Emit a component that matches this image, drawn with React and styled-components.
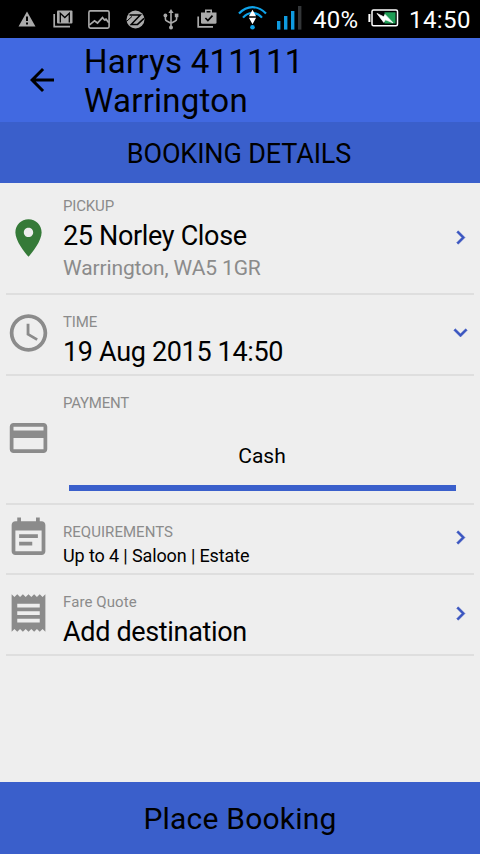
import React from 'react';
import styled, { createGlobalStyle } from 'styled-components';

const GlobalStyle = createGlobalStyle`
  * {
    box-sizing: border-box;
  }

  body {
    margin: 0;
    background: #eee;
    font-family: Roboto, "Liberation Sans", sans-serif;
    color: #000;
  }
`;

const Screen = styled.div`
  display: flex;
  flex-direction: column;
  width: 480px;
  height: 854px;
  overflow: hidden;
  background: #eee;
`;

const StatusBar = styled.div`
  display: flex;
  align-items: center;
  flex: none;
  height: 38px;
  padding-left: 9px;
  background: #000;
  color: #fff;
  white-space: nowrap;
`;

const StatusSlot = styled.span`
  display: flex;
  justify-content: center;
  flex: none;
  width: ${props => props.$width || 36}px;
  margin-left: ${props => props.$gap || 0}px;
  padding-bottom: ${props => props.$lift || 0}px;

  svg {
    display: block;
    flex: none;
  }
`;

const StatusText = styled.span`
  flex: none;
  width: ${props => props.$width}px;
  margin-left: ${props => props.$gap}px;
  padding-top: 1px;
  font-size: 24px;
  line-height: 30px;
  letter-spacing: ${props => props.$spacing || 0}px;
`;

const AppBar = styled.header`
  display: flex;
  align-items: center;
  flex: none;
  height: 84px;
  padding-left: 24px;
  background: #4169e1;
`;

const BackButton = styled.button`
  width: 36px;
  height: 36px;
  margin: 0 24px 0 0;
  padding: 0;
  border: 0;
  background: none;

  svg {
    display: block;
  }
`;

const AppTitle = styled.h1`
  width: 260px;
  margin: 0;
  padding-top: 2px;
  font-size: 33px;
  font-weight: 400;
  line-height: 39px;
  letter-spacing: 0.25px;
`;

const SubHeader = styled.h2`
  flex: none;
  height: 61px;
  margin: 0;
  padding-right: 2px;
  background: #3a5fcb;
  font-size: 27px;
  font-weight: 400;
  line-height: 64px;
  letter-spacing: -0.15px;
  text-align: center;
`;

const List = styled.main`
  flex: 1;
  padding: 0 6px;
`;

const Row = styled.section`
  display: flex;
  height: ${props => props.$height}px;
  border-bottom: 2px solid #dedede;
`;

const RowIcon = styled.div`
  display: flex;
  justify-content: center;
  flex: none;
  width: 45px;
  padding-top: ${props => props.$top}px;

  svg {
    display: block;
    fill: ${props => props.$color || '#8b8b8b'};
  }
`;

const RowBody = styled.div`
  flex: 1;
  padding: ${props => props.$top || 18}px 0 0 12px;
  white-space: nowrap;
`;

const Label = styled.div`
  margin-bottom: 4px;
  color: #8b8b8b;
  font-size: 15px;
  line-height: 18px;
  letter-spacing: ${props => props.$spacing || 0}px;
`;

const Title = styled.div`
  padding-top: 1px;
  font-size: 27px;
  line-height: 32px;
  letter-spacing: -0.34px;
`;

const SubTitle = styled.div`
  margin-top: 4px;
  color: #8b8b8b;
  font-size: 21px;
  line-height: 25px;
  letter-spacing: -0.12px;
`;

const SmallTitle = styled.div`
  font-size: 18px;
  line-height: 22px;
  letter-spacing: -0.12px;
`;

const PaymentTab = styled.div`
  width: 387px;
  height: 48px;
  margin: 31px 0 0 6px;
  padding: 1px 1px 0 0;
  border-bottom: 6px solid #3a5fcb;
  font-size: 21px;
  line-height: 25px;
  text-align: center;
`;

const RowArrow = styled.div`
  flex: none;
  width: 27px;
  padding-top: ${props => props.$top}px;

  svg {
    display: block;
    fill: #3a55c0;
    stroke: #3a55c0;
    stroke-width: 0.4;
  }
`;

const PlaceButton = styled.button`
  flex: none;
  height: 72px;
  margin: 0;
  padding: 2px 0 0;
  border: 0;
  background: #3a5fcb;
  color: #000;
  font-family: inherit;
  font-size: 30px;
  line-height: 36px;
  letter-spacing: 0.2px;
`;

const paths = {
  place: 'M12 2C8.13 2 5 5.13 5 9c0 5.25 7 13 7 13s7-7.75 7-13c0-3.87-3.13-7-7-7zm0 9.5c-1.38 0-2.5-1.12-2.5-2.5s1.12-2.5 2.5-2.5 2.5 1.12 2.5 2.5-1.12 2.5-2.5 2.5z',
  time: 'M11.99 2C6.47 2 2 6.48 2 12s4.47 10 9.99 10C17.52 22 22 17.52 22 12S17.52 2 11.99 2zM12 20c-4.42 0-8-3.58-8-8s3.58-8 8-8 8 3.58 8 8-3.58 8-8 8zm.5-13H11v6l5.25 3.15.75-1.23-4.5-2.67z',
  card: 'M20 4H4c-1.11 0-1.99.89-1.99 2L2 18c0 1.11.89 2 2 2h16c1.11 0 2-.89 2-2V6c0-1.11-.89-2-2-2zm0 14H4v-6h16v6zm0-10H4V6h16v2z',
  note: 'M17 10H7v2h10v-2zm2-7h-1V1h-2v2H8V1H6v2H5c-1.11 0-1.99.9-1.99 2L3 19c0 1.1.89 2 2 2h14c1.1 0 2-.9 2-2V5c0-1.1-.9-2-2-2zm0 16H5V8h14v11zm-5-5H7v2h7v-2z',
  receipt: 'M18 17H6v-2h12v2zm0-4H6v-2h12v2zm0-4H6V7h12v2zM3 22l1.5-1.5L6 22l1.5-1.5L9 22l1.5-1.5L12 22l1.5-1.5L15 22l1.5-1.5L18 22l1.5-1.5L21 22V2l-1.5 1.5L18 2l-1.5 1.5L15 2l-1.5 1.5L12 2l-1.5 1.5L9 2 7.5 3.5 6 2 4.5 3.5 3 2v20z',
  right: 'M10 6L8.59 7.41 13.17 12l-4.58 4.59L10 18l6-6z',
  down: 'M16.59 8.59L12 13.17 7.41 8.59 6 10l6 6 6-6z',
  back: 'M20 11H7.83l5.59-5.59L12 4l-8 8 8 8 1.41-1.41L7.83 13H20v-2z'
};

const Icon = ({ name, size }) => (
  <svg width={size} height={size} viewBox="0 0 24 24">
    <path d={paths[name]} />
  </svg>
);

const WarningIcon = () => (
  <svg width="18" height="16" viewBox="0 0 18 16">
    <path d="M9 0.5L17.5 15.5H0.5z" fill="#aaa" />
    <path d="M8 5.5h2v4.6H8zM8 11.5h2v2H8z" fill="#000" />
  </svg>
);

const MailIcon = () => (
  <svg width="20" height="18" viewBox="0 0 20 18">
    <path d="M1.2 4v12.7H17" fill="none" stroke="#aaa" strokeWidth="1.7" />
    <path d="M5 0.5h13.5q1 0 1 1v11q0 1-1 1H5q-1 0-1-1v-11q0-1 1-1z" fill="#aaa" />
    <path d="M7.3 12.5V3.2l4.5 4.3 4.5-4.3v9.3" fill="none" stroke="#000" strokeWidth="1.3" />
  </svg>
);

const PictureIcon = () => (
  <svg width="22" height="19" viewBox="0 0 22 19">
    <rect x="0.9" y="0.9" width="20.2" height="17.2" rx="1.5" fill="none" stroke="#aaa" strokeWidth="1.6" />
    <path d="M1.5 14.8l5-4 3 2.2 5-5.4 2 2.4 1.5-.8 2.8 3.4" fill="none" stroke="#aaa" strokeWidth="1.7" />
  </svg>
);

const ZapIcon = () => (
  <svg width="19" height="19" viewBox="0 0 19 19">
    <circle cx="9.5" cy="9.5" r="9" fill="#aaa" />
    <path d="M3.5 5h10.8L5.2 14.4h6.3l6.5-6" fill="none" stroke="#000" strokeWidth="1.5" />
    <path d="M1 11l5-4.6" fill="none" stroke="#000" strokeWidth="1" />
  </svg>
);

const UsbIcon = () => (
  <svg width="16" height="21" viewBox="0 0 16 21">
    <g fill="none" stroke="#aaa" strokeWidth="1.6">
      <path d="M8 3v15M2.4 7v3q0 1.4 1.4 2L8 14.2M13.6 7v3q0 1.4-1.4 2L8 14.2" />
    </g>
    <g fill="#aaa">
      <path d="M8 0l2.6 4H5.4z" />
      <circle cx="2.4" cy="6.4" r="1.9" />
      <path d="M11.8 4.6h3.6v3.6h-3.6z" />
      <circle cx="8" cy="18.6" r="2" />
    </g>
  </svg>
);

const ShopIcon = () => (
  <svg width="20" height="19" viewBox="0 0 20 19">
    <path d="M1.2 7.5v10.3H16" fill="none" stroke="#aaa" strokeWidth="1.7" />
    <path d="M8.8 4V1.2h5.4V4" fill="none" stroke="#aaa" strokeWidth="1.6" />
    <path d="M4 3.5h15.5v10q0 1.3-1.3 1.3H5.3Q4 14.8 4 13.5z" fill="#aaa" />
    <path d="M8.4 9l2.5 2.5 4.6-4.8" fill="none" stroke="#000" strokeWidth="1.7" />
  </svg>
);

const WifiIcon = () => (
  <svg width="29" height="26" viewBox="0 0 29 26">
    <g fill="none" stroke="#0fa3ea" strokeWidth="2.2">
      <path d="M1 7.6Q7 1.2 14.5 1.2T28 7.6" />
      <path d="M5 11.6Q9 7 14.5 7T24 11.6" />
    </g>
    <circle cx="14.5" cy="21.2" r="2.3" fill="#0fa3ea" />
    <path d="M14.5 3.8l3.6 6.4h-7.2zM10.9 11.8h7.2l-3.6 6.4z" fill="#fff" />
  </svg>
);

const SignalIcon = () => (
  <svg width="26" height="24" viewBox="0 0 26 24">
    <g fill="#0f9be0">
      <rect x="1" y="15" width="3.4" height="8.6" />
      <rect x="8" y="10" width="3.4" height="13.6" />
      <rect x="15" y="5" width="3.4" height="18.6" />
    </g>
    <rect x="22" y="0" width="3.4" height="23.6" fill="#333638" />
  </svg>
);

const BatteryIcon = () => (
  <svg width="31" height="18" viewBox="0 0 31 18">
    <rect x="0.4" y="5" width="2" height="8" fill="#fff" />
    <rect x="4" y="1" width="25.5" height="15.8" rx="1.5" fill="#000" stroke="#fff" strokeWidth="1.5" />
    <rect x="16.5" y="3.3" width="11" height="11.2" fill="#1f9d55" />
    <path d="M9 4.4l6.8 3.4 1.2-2.4 8 8.4-7.6-3-1.6 2.6z" fill="#fff" stroke="#fff" strokeWidth=".7" />
  </svg>
);

const rows = [
  { label: 'PICKUP', spacing: -0.15, title: '25 Norley Close', sub: 'Warrington, WA5 1GR', icon: 'place', color: '#357a38', height: 112, top: 14, iconTop: 32, arrow: 'right', arrowTop: 40.5 },
  { label: 'TIME', spacing: -0.1, title: '19 Aug 2015 14:50', icon: 'time', height: 81, iconTop: 15, arrow: 'down', arrowTop: 24 },
  { label: 'PAYMENT', spacing: -0.25, tab: 'Cash', icon: 'card', height: 129, iconTop: 39 },
  { label: 'REQUIREMENTS', spacing: 0.04, small: 'Up to 4 | Saloon | Estate', icon: 'note', height: 70, iconTop: 10, arrow: 'right', arrowTop: 18.5 },
  { label: 'Fare Quote', spacing: 0.1, title: 'Add destination', icon: 'receipt', height: 81, iconTop: 15, arrow: 'right', arrowTop: 24.5 }
];

const App = () => (
  <>
    <GlobalStyle />
    <Screen>
      <StatusBar>
        <StatusSlot><WarningIcon /></StatusSlot>
        <StatusSlot><MailIcon /></StatusSlot>
        <StatusSlot><PictureIcon /></StatusSlot>
        <StatusSlot><ZapIcon /></StatusSlot>
        <StatusSlot><UsbIcon /></StatusSlot>
        <StatusSlot $lift={1}><ShopIcon /></StatusSlot>
        <StatusSlot $width={30} $gap={12}><WifiIcon /></StatusSlot>
        <StatusSlot $width={26} $gap={9} $lift={2}><SignalIcon /></StatusSlot>
        <StatusText $width={48} $gap={11} $spacing={0.3}>40%</StatusText>
        <StatusSlot $width={32} $gap={6} $lift={2}><BatteryIcon /></StatusSlot>
        <StatusText $width={70} $gap={10} $spacing={0.4}>14:50</StatusText>
      </StatusBar>
      <AppBar>
        <BackButton><Icon name="back" size={36} /></BackButton>
        <AppTitle>Harrys 411111 Warrington</AppTitle>
      </AppBar>
      <SubHeader>BOOKING DETAILS</SubHeader>
      <List>
        {rows.map(row => (
          <Row key={row.label} $height={row.height}>
            <RowIcon $top={row.iconTop} $color={row.color}>
              <Icon name={row.icon} size={46} />
            </RowIcon>
            <RowBody $top={row.top}>
              <Label $spacing={row.spacing}>{row.label}</Label>
              {row.title && <Title>{row.title}</Title>}
              {row.sub && <SubTitle>{row.sub}</SubTitle>}
              {row.small && <SmallTitle>{row.small}</SmallTitle>}
              {row.tab && <PaymentTab>{row.tab}</PaymentTab>}
            </RowBody>
            {row.arrow && (
              <RowArrow $top={row.arrowTop}>
                <Icon name={row.arrow} size={27} />
              </RowArrow>
            )}
          </Row>
        ))}
      </List>
      <PlaceButton>Place Booking</PlaceButton>
    </Screen>
  </>
);

export default App;
